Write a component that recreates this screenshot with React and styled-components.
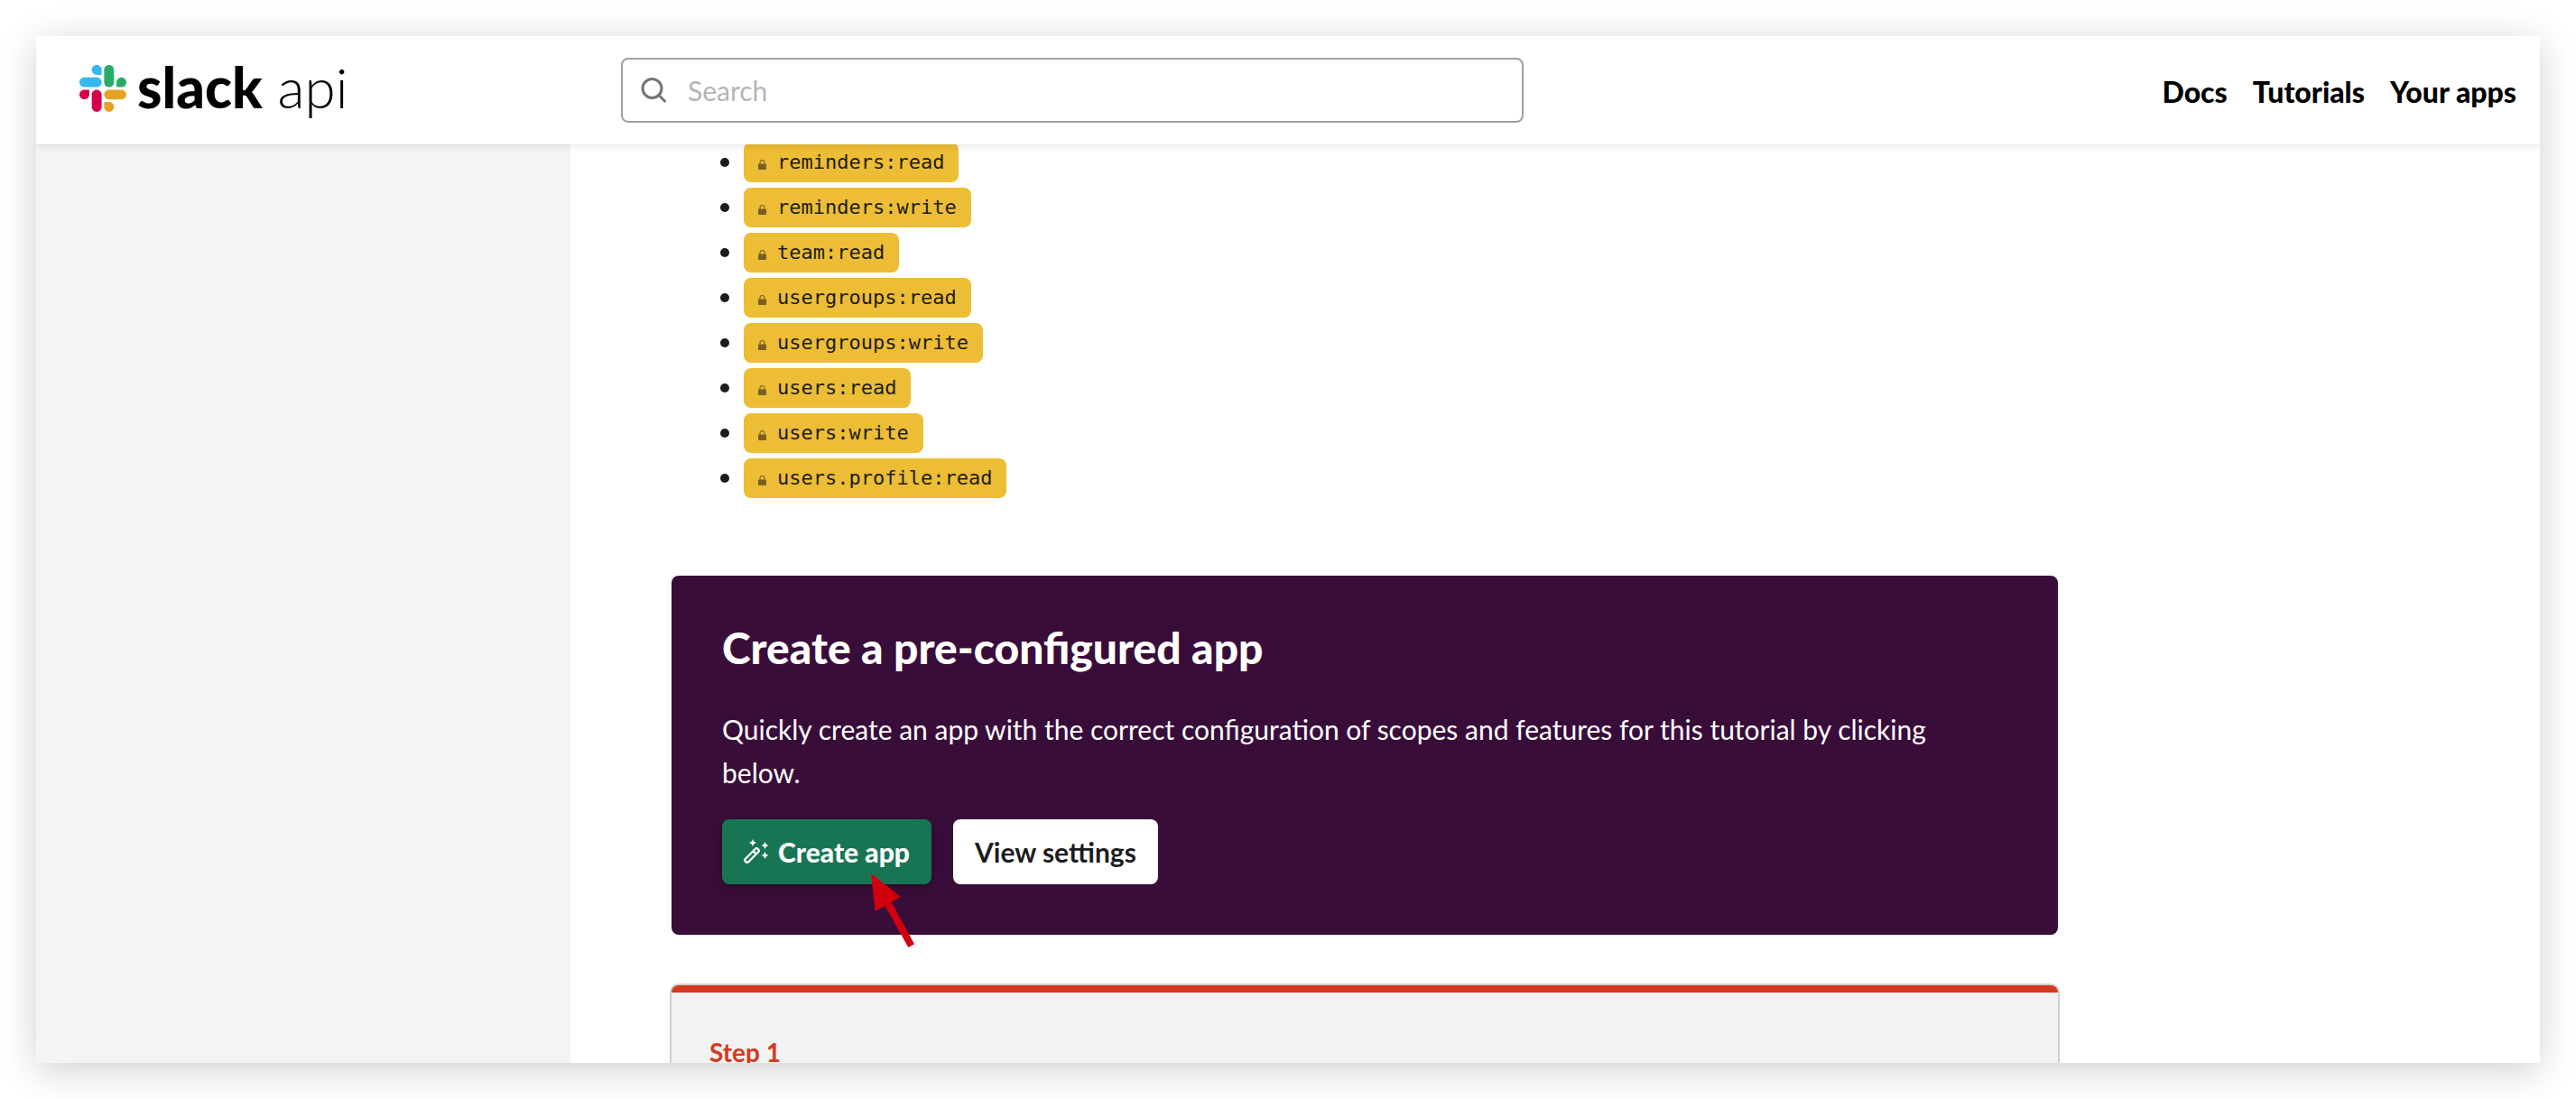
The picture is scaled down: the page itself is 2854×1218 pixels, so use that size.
import React from "react";
import styled, { createGlobalStyle } from "styled-components";

const GlobalStyle = createGlobalStyle`
  *, *::before, *::after { box-sizing: border-box; }
  body {
    margin: 0;
    background: #fff;
    color: #1d1c1d;
    font-family: Lato, "Liberation Sans", sans-serif;
    font-size: 30px;
    line-height: 48px;
  }
`;

const Backdrop = styled.div`
  display: flex;
  height: 100vh;
  padding: 40px;
  overflow: hidden;
`;

const Page = styled.div`
  flex: 1;
  display: flex;
  flex-direction: column;
  min-width: 0;
  overflow: hidden;
  background: #fff;
  box-shadow: 0 8px 40px rgba(0, 0, 0, 0.19);
`;

const Header = styled.header`
  position: relative;
  z-index: 1;
  flex: none;
  display: grid;
  grid-template-columns: 600px minmax(300px, 1000px) 1fr;
  align-items: center;
  height: 120px;
  padding: 0 26px 0 48px;
  background: #fff;
  box-shadow: 0 2px 8px rgba(0, 0, 0, 0.1);
`;

const Brand = styled.a`
  display: flex;
  align-items: center;
  gap: 12px;
  padding-bottom: 4px;
  color: #000;
  text-decoration: none;
  font-size: 62px;
  line-height: 60px;
`;

const BrandMark = styled.svg`
  width: 52px;
  height: 52px;
`;

const BrandName = styled.span`
  padding-bottom: 4px;
  font-weight: 300;
  strong { font-weight: 900; }
`;

const SearchBox = styled.label`
  display: flex;
  align-items: center;
  gap: 22px;
  height: 72px;
  padding: 0 20px;
  border: 2px solid #a0a0a0;
  border-radius: 8px;
  svg { flex: none; width: 30px; height: 30px; }
`;

const SearchInput = styled.input`
  flex: 1;
  min-width: 0;
  padding: 0;
  border: 0;
  outline: 0;
  background: none;
  font: inherit;
  color: #1d1c1d;
  &::placeholder { color: #b5b5b5; opacity: 1; }
`;

const Nav = styled.nav`
  display: flex;
  justify-content: flex-end;
  gap: 28px;
  padding-top: 4px;
`;

const NavLink = styled.a`
  color: #000;
  font-size: 32px;
  font-weight: 900;
  text-decoration: none;
`;

const Body = styled.div`
  flex: 1;
  display: flex;
  min-height: 0;
`;

const Sidebar = styled.aside`
  flex: none;
  width: 592px;
  background: #f4f4f4;
`;

const Article = styled.main`
  flex: 1;
  min-width: 0;
  padding: 0 112px;
`;

const Column = styled.div`
  max-width: 1536px;
`;

const ScopeList = styled.ul`
  display: grid;
  gap: 6px;
  margin: -2px 0 86px;
  padding: 0 0 0 54px;
  list-style: none;
`;

const ScopeItem = styled.li`
  display: flex;
  align-items: center;
  gap: 16px;
  &::before {
    content: "";
    width: 10px;
    height: 10px;
    border-radius: 50%;
    background: #1d1c1d;
  }
`;

const ScopeTag = styled.a`
  display: flex;
  align-items: center;
  gap: 12px;
  height: 44px;
  padding: 0 16px;
  border-radius: 8px;
  background: #ecbd35;
  color: #1d1c1d;
  font-family: "DejaVu Sans Mono", monospace;
  font-size: 22px;
  line-height: 44px;
  text-decoration: none;
  svg { width: 9px; height: 11px; margin-top: 4px; }
`;

const Callout = styled.section`
  padding: 48px 56px 56px;
  border-radius: 8px;
  background: #390d39;
  color: #fff;
`;

const CalloutTitle = styled.h2`
  margin: 0 0 34px;
  font-size: 48px;
  font-weight: 900;
  line-height: 64px;
`;

const CalloutText = styled.p`
  margin: 0 0 28px;
`;

const Actions = styled.div`
  display: flex;
  gap: 24px;
`;

const Anchor = styled.div`
  position: relative;
`;

const Button = styled.button`
  display: flex;
  align-items: center;
  gap: 10px;
  height: 72px;
  padding: 0 24px;
  border: 0;
  border-radius: 8px;
  background: ${(p) => (p.$primary ? "#187554" : "#fff")};
  color: ${(p) => (p.$primary ? "#fff" : "#1d1c1d")};
  box-shadow: ${(p) => (p.$primary ? "0 2px 8px rgba(0, 0, 0, 0.35)" : "none")};
  font: inherit;
  font-weight: ${(p) => (p.$primary ? 900 : 700)};
  svg { width: 28px; height: 28px; }
`;

const Pointer = styled.svg`
  position: absolute;
  left: 165px;
  top: 60px;
  width: 48px;
  height: 82px;
`;

const StepCard = styled.section`
  margin-top: 56px;
  border-radius: 8px;
  overflow: hidden;
  border-top: 8px solid #d63820;
  background: #f3f3f3;
  box-shadow: 0 0 0 2px #d0d0d0;
  padding: 46px 42px;
`;

const StepLabel = styled.h3`
  margin: 0;
  color: #d63820;
  font-size: 28px;
  font-weight: 700;
  line-height: 40px;
`;

const scopes = [
  "reminders:read",
  "reminders:write",
  "team:read",
  "usergroups:read",
  "usergroups:write",
  "users:read",
  "users:write",
  "users.profile:read",
];

const LockIcon = () => (
  <svg viewBox="0 0 9 11" aria-hidden="true">
    <rect y="4.5" width="9" height="6.5" rx="1" fill="#786023" />
    <path d="M2 5V3a2.5 2.5 0 0 1 5 0v2" fill="none" stroke="#786023" strokeWidth="1.1" />
  </svg>
);

const WandIcon = () => (
  <svg viewBox="0 0 28 28" aria-hidden="true">
    <g fill="none" stroke="#fff" strokeWidth="2.2" strokeLinejoin="round">
      <path d="M12.6 10.9 1.9 21.7a2.2 2.2 0 0 0 0 3.1l.3.3a2.2 2.2 0 0 0 3.1 0L16.1 14.3a2.2 2.2 0 0 0 0-3.1l-.3-.3a2.2 2.2 0 0 0-3.2 0Z" />
      <path d="m10.4 13.1 3.5 3.5" />
    </g>
    <path d="M10 0l1.300 2.700L14 4l-2.700 1.300L10 8 8.700 5.300 6 4l2.700-1.300zM23.500 3l1.300 2.700L27.500 7l-2.700 1.300L23.500 11l-1.300-2.700L19.500 7l2.700-1.300zM23.500 14l1.300 2.700 2.700 1.300-2.700 1.300-1.300 2.700-1.300-2.700-2.700-1.300 2.700-1.300z" fill="#fff" />
  </svg>
);

const SlackMark = () => (
  <BrandMark viewBox="0 0 122.8 122.8" aria-hidden="true">
    <g fill="#d6004b">
      <path d="M25.8 77.600c0 7.100-5.800 12.900-12.900 12.900S0 84.700 0 77.600s5.800-12.900 12.900-12.900h12.900v12.900z" />
      <path d="M32.300 77.600c0-7.100 5.800-12.900 12.900-12.900s12.900 5.800 12.900 12.900v32.300c0 7.100-5.800 12.900-12.900 12.900s-12.900-5.800-12.900-12.900V77.600z" />
    </g>
    <g fill="#33b9ee">
      <path d="M45.200 25.800c-7.100 0-12.900-5.800-12.900-12.900S38.100 0 45.200 0s12.900 5.800 12.900 12.900v12.900H45.200z" />
      <path d="M45.200 32.300c7.100 0 12.900 5.800 12.900 12.900s-5.800 12.900-12.900 12.900H12.900C5.800 58.100 0 52.300 0 45.200s5.800-12.900 12.900-12.900h32.300z" />
    </g>
    <g fill="#2aab69">
      <path d="M97 45.200c0-7.100 5.800-12.900 12.900-12.900s12.900 5.800 12.900 12.900-5.800 12.900-12.900 12.900H97V45.200z" />
      <path d="M90.500 45.200c0 7.100-5.800 12.900-12.900 12.900s-12.900-5.800-12.900-12.900V12.900C64.700 5.800 70.500 0 77.600 0s12.900 5.800 12.900 12.900v32.300z" />
    </g>
    <g fill="#e5a324">
      <path d="M77.600 97c7.100 0 12.900 5.800 12.900 12.900s-5.800 12.900-12.900 12.900-12.900-5.800-12.900-12.900V97h12.900z" />
      <path d="M77.600 90.500c-7.100 0-12.900-5.800-12.900-12.900s5.800-12.900 12.900-12.900h32.300c7.100 0 12.900 5.800 12.900 12.900s-5.800 12.900-12.900 12.900H77.600z" />
    </g>
  </BrandMark>
);

export default function App() {
  return (
    <Backdrop>
      <GlobalStyle />
      <Page>
        <Header>
          <Brand href="#">
            <SlackMark />
            <BrandName><strong>slack</strong> api</BrandName>
          </Brand>
          <SearchBox>
            <svg viewBox="0 0 30 30" fill="none" stroke="#757575" strokeWidth="3" strokeLinecap="round" aria-hidden="true">
              <circle cx="12.500" cy="13" r="10.500" />
              <path d="m20 20.500 6.500 6.500" />
            </svg>
            <SearchInput type="search" placeholder="Search" aria-label="Search" />
          </SearchBox>
          <Nav>
            <NavLink href="#">Docs</NavLink>
            <NavLink href="#">Tutorials</NavLink>
            <NavLink href="#">Your apps</NavLink>
          </Nav>
        </Header>
        <Body>
          <Sidebar />
          <Article>
            <Column>
              <ScopeList>
                {scopes.map((scope) => (
                  <ScopeItem key={scope}>
                    <ScopeTag href="#"><LockIcon />{scope}</ScopeTag>
                  </ScopeItem>
                ))}
              </ScopeList>
              <Callout>
                <CalloutTitle>Create a pre-configured app</CalloutTitle>
                <CalloutText>
                  Quickly create an app with the correct configuration of scopes and features for this tutorial by clicking below.
                </CalloutText>
                <Actions>
                  <Anchor>
                    <Button type="button" $primary><WandIcon />Create app</Button>
                    <Pointer viewBox="0 0 144 246" aria-hidden="true">
                      <path d="M0 0 99 78 68 95 144 235 124 246 47 108 14 125Z" fill="#d1000f" />
                    </Pointer>
                  </Anchor>
                  <Button type="button">View settings</Button>
                </Actions>
              </Callout>
              <StepCard>
                <StepLabel>Step 1</StepLabel>
              </StepCard>
            </Column>
          </Article>
        </Body>
      </Page>
    </Backdrop>
  );
}
